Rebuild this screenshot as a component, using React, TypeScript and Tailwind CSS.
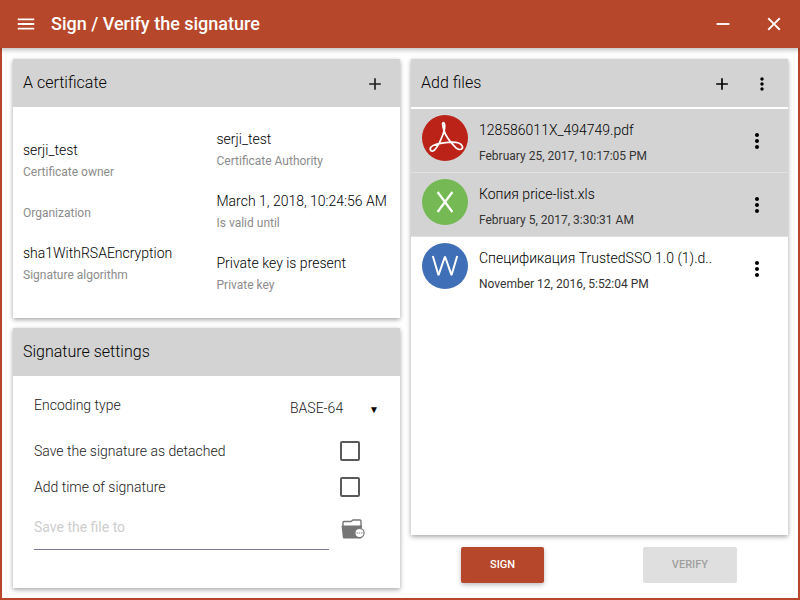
import React from "react";
import { MdMenu, MdRemove, MdClose, MdAdd, MdMoreVert } from "react-icons/md";

const cardShadow =
  "shadow-[0_2px_5px_0_rgba(0,0,0,0.26),0_1px_4px_0_rgba(0,0,0,0.12)]";

function PanelHeader({ title, children }: { title: string; children?: React.ReactNode }) {
  return (
    <header className="flex h-12 shrink-0 items-center justify-between bg-[#d3d3d3] pl-[10px]">
      <h2 className="text-base font-light">{title}</h2>
      <div className="flex items-center">{children}</div>
    </header>
  );
}

function Field({ value, label }: { value?: string; label: string }) {
  return (
    <div>
      {value && <dd className="text-sm leading-[21px] font-light">{value}</dd>}
      <dt className="text-xs leading-[23px] text-[#8c8c8c]">{label}</dt>
    </div>
  );
}

function PdfIcon() {
  return (
    <svg viewBox="0 0 46 46" className="size-[46px] shrink-0" aria-hidden="true">
      <circle cx="23" cy="23" r="23" fill="#bb2318" />
      <path
        d="M21.2 7.5C20.2 7.6 20.6 11 22 15.500C24 22.500 29.500 28.500 34.500 33.300C38 35.800 41.300 33.800 40.300 31.200C39 28 33 26.800 26 27.400C19 28 11.500 29.500 9 32C7 35 9.500 37.500 12.500 35C16.500 31 21.500 20 22.600 13.500C23 10 22.500 7.500 21.200 7.500Z"
        fill="none"
        stroke="#fff"
        strokeWidth="1.700"
      />
    </svg>
  );
}

function SheetIcon() {
  return (
    <svg viewBox="0 0 46 46" className="size-[46px] shrink-0" aria-hidden="true">
      <circle cx="23" cy="23" r="23" fill="#75b955" />
      <path d="M15.600 13L30.400 33M30.400 13L15.600 33" stroke="#fff" strokeWidth="2.200" />
    </svg>
  );
}

function DocIcon() {
  return (
    <svg viewBox="0 0 46 46" className="size-[46px] shrink-0" aria-hidden="true">
      <circle cx="23" cy="23" r="23" fill="#3f6fb7" />
      <path
        d="M10.800 13L16.500 32.200L23 13.500L29.500 32.200L35.200 13"
        fill="none"
        stroke="#fff"
        strokeWidth="2"
        strokeLinejoin="bevel"
      />
    </svg>
  );
}

function FolderIcon() {
  return (
    <svg viewBox="0 0 24 20" className="h-5 w-6" aria-hidden="true">
      <path d="M2 7V3.500Q2 2.500 3 2.500H10L12 1H19Q20 1 20 2V7" fill="none" stroke="#757575" strokeWidth="1.400" />
      <path d="M0.500 6.500H21L20 19Q20 19.500 19 19.500H3Q2 19.500 1.800 18.500Z" fill="#757575" />
      <circle cx="18.500" cy="14" r="4.600" fill="#fff" stroke="#757575" strokeWidth="1.200" />
      <path d="M15.500 14H21.500" stroke="#757575" strokeWidth="1.200" strokeDasharray="1.400 0.900" />
    </svg>
  );
}

const files = [
  { name: "128586011X_494749.pdf", date: "February 25, 2017, 10:17:05 PM", icon: <PdfIcon />, selected: true },
  { name: "Копия price-list.xls", date: "February 5, 2017, 3:30:31 AM", icon: <SheetIcon />, selected: true },
  { name: "Спецификация TrustedSSO 1.0 (1).d..", date: "November 12, 2016, 5:52:04 PM", icon: <DocIcon />, selected: false },
];

function CheckRow({ id, label }: { id: string; label: string }) {
  return (
    <div className="flex h-9 items-center justify-between pr-[19px]">
      <label htmlFor={id}>{label}</label>
      <input id={id} type="checkbox" className="size-5 appearance-none rounded-xs border-2 border-[#5a5a5a]" />
    </div>
  );
}

export default function App() {
  return (
    <div className="flex min-h-screen flex-col border-x-2 border-b-2 border-[#b7472a] bg-white font-['Roboto',sans-serif] text-black">
      <header className="relative -mx-0.5 flex h-12 items-center bg-[#b7472a] pr-[15px] pl-[15px] text-white shadow-[0_2px_5px_0_rgba(0,0,0,0.26)]">
        <button aria-label="Menu">
          <MdMenu size={22} />
        </button>
        <h1 className="ml-[14px] flex-1 text-lg font-medium">Sign / Verify the signature</h1>
        <button aria-label="Minimize" className="mr-[29px]">
          <MdRemove size={22} />
        </button>
        <button aria-label="Close">
          <MdClose size={22} />
        </button>
      </header>

      <main className="grid flex-1 grid-cols-[387fr_377fr] gap-[11px] pt-[11px] pr-[10px] pb-[10px] pl-[11px]">
        <div className="flex flex-col gap-[10px]">
          <section className={`flex flex-1 flex-col bg-white ${cardShadow}`}>
            <PanelHeader title="A certificate">
              <button aria-label="Add certificate" className="mr-[15px] pt-0.5 text-[#212121]">
                <MdAdd size={20} />
              </button>
            </PanelHeader>
            <div className="grid flex-1 grid-cols-2 items-center pt-px pl-[10px]">
              <dl className="flex flex-col gap-[18px]">
                <Field value="serji_test" label="Certificate owner" />
                <Field label="Organization" />
                <Field value="sha1WithRSAEncryption" label="Signature algorithm" />
              </dl>
              <dl className="flex flex-col gap-[18px] pl-[5px]">
                <Field value="serji_test" label="Certificate Authority" />
                <Field value="March 1, 2018, 10:24:56 AM" label="Is valid until" />
                <Field value="Private key is present" label="Private key" />
              </dl>
            </div>
          </section>

          <section className={`flex flex-col bg-white ${cardShadow}`}>
            <PanelHeader title="Signature settings" />
            <form className="px-[21px] pt-3 pb-[38px] text-sm font-light text-[#212121]">
              <div className="flex h-[45px] items-start justify-between">
                <label htmlFor="encoding" className="pt-[7px]">
                  Encoding type
                </label>
                <div className="relative w-[89px]">
                  <select id="encoding" className="h-10 w-full appearance-none bg-transparent">
                    <option>BASE-64</option>
                  </select>
                  <span aria-hidden="true" className="pointer-events-none absolute top-3 right-0 text-[10px] leading-5 text-black">
                    ▼
                  </span>
                </div>
              </div>
              <CheckRow id="detached" label="Save the signature as detached" />
              <CheckRow id="timestamp" label="Add time of signature" />
              <div className="flex">
                <input
                  type="text"
                  aria-label="Save the file to"
                  placeholder="Save the file to"
                  className="h-[45px] min-w-0 flex-1 border-b border-[#7d7b96] font-normal placeholder:text-[#cecece]"
                />
                <button type="button" aria-label="Choose folder" className="mr-[14px] ml-3 pt-0.5">
                  <FolderIcon />
                </button>
              </div>
            </form>
          </section>
        </div>

        <div className="flex flex-col">
          <section className={`flex flex-1 flex-col bg-white ${cardShadow}`}>
            <PanelHeader title="Add files">
              <button aria-label="Add file" className="mr-5 pt-0.5">
                <MdAdd size={20} />
              </button>
              <button aria-label="More actions" className="mr-4 pt-0.5">
                <MdMoreVert size={20} />
              </button>
            </PanelHeader>
            <ul className="mt-0.5">
              {files.map((file) => (
                <li
                  key={file.name}
                  className={
                    file.selected
                      ? "flex h-16 items-start border-b border-[#e0e0e0] bg-[#d3d3d3] pt-1.5 pr-[19px] pl-[11px]"
                      : "flex h-16 items-start pt-1.5 pr-[19px] pl-[11px]"
                  }
                >
                  {file.icon}
                  <div className="ml-[11px] min-w-0 flex-1 pt-[5px]">
                    <p className="truncate text-sm font-light">{file.name}</p>
                    <p className="mt-[6px] text-xs leading-5 text-[#333]">{file.date}</p>
                  </div>
                  <button aria-label={`Actions for ${file.name}`} className="mt-3.5">
                    <MdMoreVert size={24} />
                  </button>
                </li>
              ))}
            </ul>
          </section>
          <div className="flex justify-between pt-3 pr-[51px] pb-[5px] pl-[50px] text-[11px] font-medium">
            <button className="h-9 rounded-xs bg-[#b7472a] px-[29px] text-white shadow-[0_2px_5px_0_rgba(0,0,0,0.26)]">SIGN</button>
            <button disabled className="h-9 rounded-xs bg-[#dfdfdf] px-[29px] text-[#9f9f9f]">
              VERIFY
            </button>
          </div>
        </div>
      </main>
    </div>
  );
}
